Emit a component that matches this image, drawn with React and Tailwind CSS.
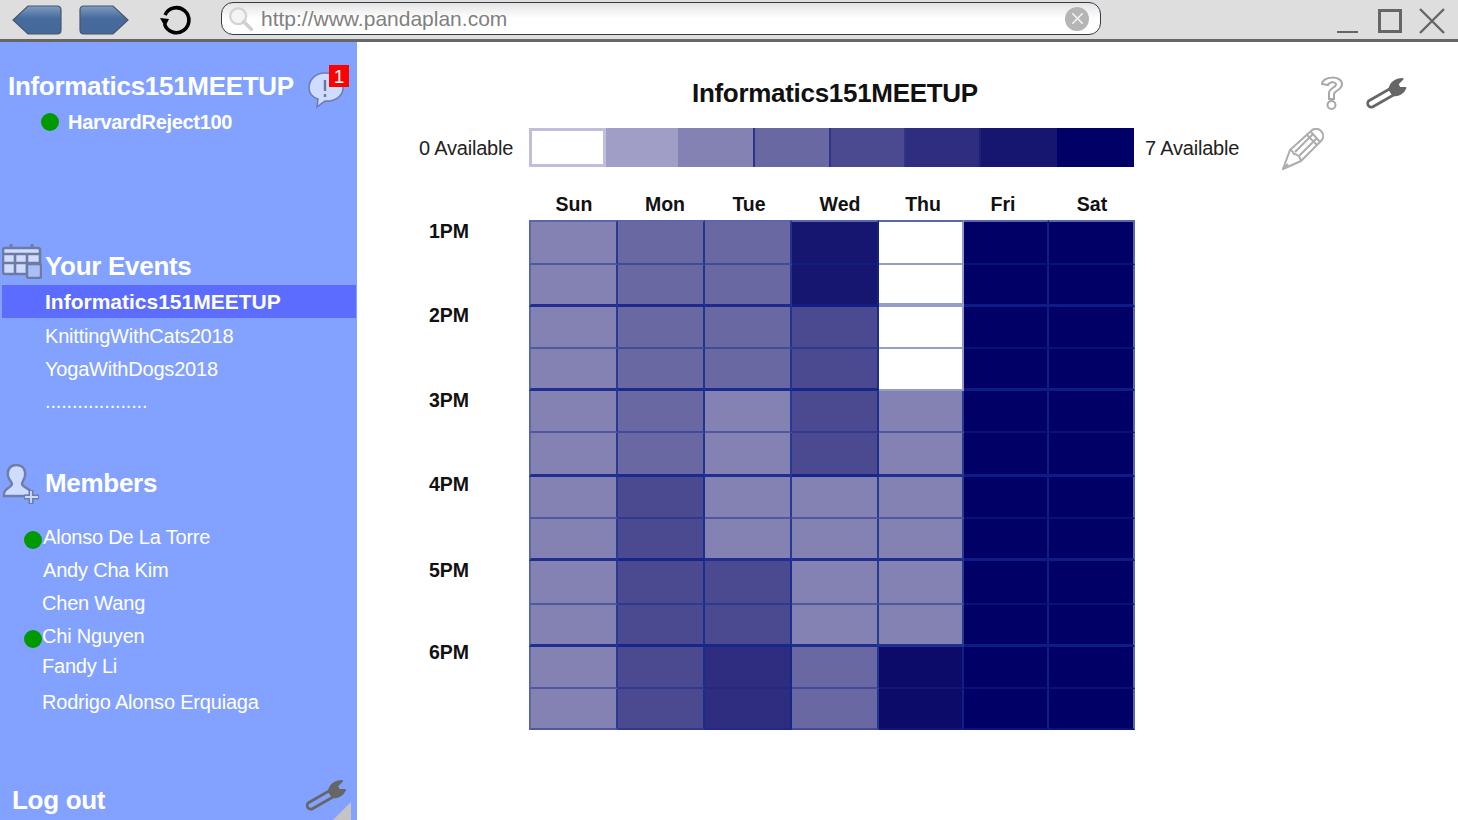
import { X } from "lucide-react";

const levels = [
  "bg-[#ffffff]",
  "bg-[#a09ec6]",
  "bg-[#8482b3]",
  "bg-[#6a68a3]",
  "bg-[#4b4a90]",
  "bg-[#2e2d80]",
  "bg-[#161570]",
  "bg-[#000066]",
  "bg-[#0c0b69]",
];

const dayLabels = [
  ["Sun", "w-[90px]"],
  ["Mon", "w-[92px]"],
  ["Tue", "w-[76px]"],
  ["Wed", "w-[106px]"],
  ["Thu", "w-[60px]"],
  ["Fri", "w-[100px]"],
  ["Sat", "w-[78px]"],
];

const timeLabels = [
  ["1PM", "h-[84px]"],
  ["2PM", "h-[85px]"],
  ["3PM", "h-[84px]"],
  ["4PM", "h-[86px]"],
  ["5PM", "h-[82px]"],
  ["6PM", "h-[60px]"],
];

// availability per half hour, one number per day (8 = the slightly darker Thu evening)
const slots = [
  [2, 3, 3, 6, 0, 7, 7],
  [2, 3, 3, 6, 0, 7, 7],
  [2, 3, 3, 4, 0, 7, 7],
  [2, 3, 3, 4, 0, 7, 7],
  [2, 3, 2, 4, 2, 7, 7],
  [2, 3, 2, 4, 2, 7, 7],
  [2, 4, 2, 2, 2, 7, 7],
  [2, 4, 2, 2, 2, 7, 7],
  [2, 4, 4, 2, 2, 7, 7],
  [2, 4, 4, 2, 2, 7, 7],
  [2, 4, 5, 3, 8, 7, 7],
  [2, 4, 5, 3, 8, 7, 7],
];

const members = [
  ["Alonso De La Torre", true, "pl-[43px]"],
  ["Andy Cha Kim", false, "pl-[43px]"],
  ["Chen Wang", false, "pl-[42px]"],
  ["Chi Nguyen", true, "pl-[42px]"],
  ["Fandy Li", false, "pl-[42px] -mt-[3px]"],
  ["Rodrigo Alonso Erquiaga", false, "pl-[42px] mt-[3px]"],
];

function Wrench({ className }) {
  return (
    <svg viewBox="0 0 42 32" className={className} fill="none">
      <path
        d="M3 24 L24 12 L28 18 L7 30 C3 31 1 27 3 24 Z"
        stroke="#666"
        strokeWidth="2.6"
        strokeLinejoin="round"
      />
      <path d="M24 12 C25 6 30 2 37 2 L32 7 L34 11 L40 11 C38 16 33 19 28 18 Z" fill="#666" stroke="#666" strokeWidth="2" strokeLinejoin="round" />
    </svg>
  );
}

function NavArrow({ flip, id }) {
  return (
    <svg viewBox="0 0 50 30" className={`w-[50px] h-[30px] ${flip ? "-scale-x-100" : ""}`}>
      <defs>
        <linearGradient id={id} x1="0" y1="0" x2="0" y2="1">
          <stop offset="0" stopColor="#7f9cc2" />
          <stop offset="0.45" stopColor="#456a9c" />
          <stop offset="1" stopColor="#47699a" />
        </linearGradient>
      </defs>
      <path d="M5 1 H34 L49 15 L34 29 H5 Q1 29 1 25 V5 Q1 1 5 1 Z" fill={`url(#${id})`} stroke="#47566e" strokeWidth="1.2" />
    </svg>
  );
}

function BrowserBar() {
  return (
    <div className="h-[42px] bg-[#dedede] border-b-[3px] border-[#666666] flex items-center shrink-0">
      <div className="ml-[12px] mt-[1px]"><NavArrow flip id="navBack" /></div>
      <div className="ml-[17px] mt-[1px]"><NavArrow id="navNext" /></div>
      <svg viewBox="0 0 32 32" className="ml-[31px] w-[32px] h-[32px] mt-[1px]" fill="none">
        <path d="M5 11 A12.5 12.5 0 1 1 4.5 20" stroke="#000" strokeWidth="3.6" />
        <path d="M0 14 L9 15 L5 23 Z" fill="#000" />
      </svg>
      <div className="ml-[29px] w-[880px] h-[33px] mt-[-2px] rounded-[12px] border-[1.5px] border-[#333b47] bg-gradient-to-b from-[#e4e4e4] via-white to-white flex items-center">
        <svg viewBox="0 0 30 30" className="ml-[5px] w-[28px] h-[28px]" fill="none">
          <circle cx="12" cy="12" r="8.5" stroke="#d4d4d4" strokeWidth="2.5" fill="#f4f4f4" />
          <path d="M18 18 L26 26" stroke="#cfcfcf" strokeWidth="4" strokeLinecap="round" />
        </svg>
        <span className="ml-[6px] text-[21px] text-[#808080]">http://www.pandaplan.com</span>
        <span className="ml-auto mr-[11px] w-[24px] h-[24px] rounded-full bg-[#b5b5b5] flex items-center justify-center">
          <X size={19} color="#fff" strokeWidth={1.6} />
        </span>
      </div>
      <div className="ml-auto flex items-center">
        <span className="w-[21px] h-[2.5px] bg-[#666666] mt-[25px]" />
        <span className="ml-[20px] w-[24px] h-[24px] border-[3px] border-[#666666] mt-[3px]" />
        <svg viewBox="0 0 28 28" className="ml-[16px] mr-[12px] w-[28px] h-[28px] mt-[3px]" stroke="#666" strokeWidth="2.4">
          <path d="M2 2 L26 26 M26 2 L2 26" />
        </svg>
      </div>
    </div>
  );
}

function Sidebar() {
  return (
    <aside className="relative w-[357px] h-[778px] shrink-0 bg-[#83a2ff] text-white overflow-hidden">
      <div className="flex items-center pl-[8px] pt-[28px] h-[60px]">
        <span className="text-[26px] tracking-[-0.3px] font-bold leading-none whitespace-nowrap">Informatics151MEETUP</span>
      </div>
      {/* chat bubble with badge */}
      <svg viewBox="0 0 38 38" className="absolute left-[307px] top-[29px] w-[38px] h-[38px]">
        <path d="M18 2 C28 2 36 8 36 17 C36 25 28 31 18 30 L10 36 L11 28 C5 26 2 22 2 17 C2 8 9 2 18 2 Z" fill="#cfdcff" stroke="#6d7fb3" strokeWidth="1.6" />
        <path d="M18 9 V20 M18 23 V26" stroke="#6b7894" strokeWidth="2.4" />
      </svg>
      <span className="absolute left-[329px] top-[23px] w-[20px] h-[22px] bg-[#ff0000] flex items-center justify-center text-[19px] leading-none">1</span>

      <div className="flex items-center h-[24px] mt-[8px] pl-[41px]">
        <span className="w-[18px] h-[18px] rounded-full bg-[#009900]" />
        <span className="ml-[9px] text-[20px] tracking-[-0.3px] font-bold leading-none">HarvardReject100</span>
      </div>

      <div className="relative h-[40px] mt-[112px] pl-[45px] flex items-center">
        <svg viewBox="0 0 40 36" className="absolute left-[2px] -top-[3px] w-[40px] h-[36px]">
          <path d="M9 1 V7 M30 1 V7" stroke="#6d7ba3" strokeWidth="3" />
          <rect x="1" y="5" width="37" height="26" rx="2" fill="#cfdcff" stroke="#6d7ba3" strokeWidth="2.6" />
          <path d="M1 11 H38 M1 20 H38 M13 11 V31 M25 11 V31" stroke="#6d7ba3" strokeWidth="2.6" />
          <rect x="25" y="21" width="14" height="14" rx="2" fill="#a9bff5" stroke="#6d7ba3" strokeWidth="2.4" />
        </svg>
        <span className="text-[26px] tracking-[-0.3px] font-bold leading-none">Your Events</span>
      </div>

      <div className="-mt-[1px] ml-[2px] mr-[1px] h-[33px] bg-[#5b6cff] pl-[43px] flex items-center">
        <span className="text-[21px] font-bold leading-none">Informatics151MEETUP</span>
      </div>
      <div className="h-[35px] pl-[45px] flex items-center text-[20px] tracking-[-0.2px]">KnittingWithCats2018</div>
      <div className="h-[32px] pl-[45px] flex items-center text-[20px] tracking-[-0.2px]">YogaWithDogs2018</div>
      <div className="h-[32px] pl-[45px] flex items-center text-[20px] tracking-[-0.17px] leading-none">...................</div>

      <div className="relative h-[44px] mt-[45px] pl-[45px] flex items-center">
        <svg viewBox="0 0 40 44" className="absolute left-[2px] top-[1px] w-[40px] h-[44px]">
          <path d="M14 2 C21 2 24 7 23 13 C22 17 20 19 20 21 C20 24 27 25 29 29 L29 33 H2 L2 30 C3 25 10 24 10 21 C10 19 7 17 6 13 C5 7 8 2 14 2 Z" fill="#cfdcff" stroke="#6d7fa8" strokeWidth="2.4" />
          <path d="M29 27 V41 M22 34 H37" stroke="#6d7fa8" strokeWidth="5" />
          <path d="M29 28 V40 M23 34 H36" stroke="#cfdcff" strokeWidth="1.8" />
        </svg>
        <span className="text-[26px] tracking-[-0.3px] font-bold leading-none -mt-[2px]">Members</span>
      </div>

      <div className="mt-[14px]">
        {members.map(([name, online, rowClass]) => (
          <div key={name} className={`relative h-[33px] flex items-center text-[20px] tracking-[-0.2px] leading-none ${rowClass}`}>
            {online && <span className="absolute left-[24px] top-[11px] w-[18px] h-[18px] rounded-full bg-[#009900]" />}
            <span>{name}</span>
          </div>
        ))}
      </div>

      <div className="absolute left-[12px] top-[745px] text-[26px] tracking-[-0.3px] font-bold leading-none">Log out</div>
      <Wrench className="absolute left-[305px] top-[737px] w-[42px] h-[32px]" />
      <div className="absolute left-[333px] bottom-0 w-[18px] h-[18px] bg-[#c4c4c4] [clip-path:polygon(100%_0,100%_100%,0_100%)]" />
    </aside>
  );
}

function Legend() {
  return (
    <div className="flex items-center h-[39px] mt-[16px] pl-[62px]">
      <span className="w-[110px] text-[20px] tracking-[-0.2px] text-[#222222] whitespace-nowrap">0 Available</span>
      <div className="flex h-[39px] w-[605px]">
        <div className="w-[77px] bg-white border-[3px] border-[#c0bfdb]" />
        <div className="w-[72px] bg-[#a09ec6]" />
        <div className="w-[77px] bg-[#8482b3] border-r-2 border-[#2e3488]" />
        <div className="w-[76px] bg-[#6a68a3] border-r-2 border-[#2e3488]" />
        <div className="w-[75px] bg-[#4b4a90] border-r-2 border-[#2e3488]" />
        <div className="w-[75px] bg-[#2e2d80] border-r-2 border-[#1a2277]" />
        <div className="w-[76px] bg-[#161570]" />
        <div className="w-[77px] bg-[#000066]" />
      </div>
      <span className="ml-[11px] text-[20px] tracking-[-0.2px] text-[#222222] whitespace-nowrap">7 Available</span>
      <svg viewBox="0 0 42 42" className="ml-[43px] mt-[2px] w-[42px] h-[42px]" fill="none" stroke="#adadad" strokeWidth="2" strokeLinejoin="round">
        <path d="M1 41 L8 22 L29 3 C32 0 36 0 39 3 C42 6 42 10 39 13 L19 33 Z" fill="#fff" />
        <path d="M8 22 C10 22 11 24 12 26 C15 26 18 29 19 33 M1 41 L6 36 M25 7 L35 17 M29 4 L38 14 M13 24 L31 6 M17 28 L35 10" />
      </svg>
    </div>
  );
}

function cellBorder(level, r, c) {
  const parts = ["border-r-2"];
  if (c === 6) parts.push("border-r-[#5a66ad]");
  else if (level === 0) parts.push("border-r-[#8f9bc9]");
  else parts.push("border-r-[#10288a]/80");
  if (c === 0) parts.push("border-l-2 border-l-[#5a66ad]");
  if (r === 0) parts.push("border-t-2 border-t-[#5a66ad]");
  if (level === 0 && r === 1) parts.push("border-b-[4px] border-b-[#10288a]/45");
  else if (r % 2 === 1 && r < 11 && level !== 0) parts.push("border-b-[3px] border-b-[#10208a]/85");
  else parts.push("border-b-2 border-b-[#10288a]/45");
  return parts.join(" ");
}

function Schedule() {
  return (
    <div className="flex mt-[23px] pl-[62px]">
      <div className="w-[110px] pt-[30px] pl-[10px] text-[19.5px] font-bold text-[#111111]">
        {timeLabels.map(([label, h]) => (
          <div key={label} className={`${h} leading-[22px]`}>{label}</div>
        ))}
      </div>
      <div>
        <div className="flex h-[30px] text-[19.5px] font-bold text-[#111111]">
          {dayLabels.map(([day, w]) => (
            <div key={day} className={`${w} text-center leading-[28px]`}>{day}</div>
          ))}
        </div>
        <div className="grid w-[606px] grid-cols-[89px_87px_87px_87px_85px_85px_86px] grid-rows-[45px_42px_42px_42px_42px_44px_42px_42px_44px_42px_42px_41px]">
          {slots.flatMap((row, r) =>
            row.map((level, c) => (
              <div key={`${r}-${c}`} className={`${levels[level]} ${cellBorder(level, r, c)}`} />
            ))
          )}
        </div>
      </div>
    </div>
  );
}

export default function App() {
  return (
    <div className="w-[1458px] h-[820px] overflow-hidden bg-white font-['Liberation_Sans',Arial,sans-serif] flex flex-col">
      <BrowserBar />
      <div className="flex flex-1 min-h-0">
        <Sidebar />
        <main className="flex-1 min-w-0">
          <div className="flex items-start h-[70px]">
            <h1 className="ml-[335px] mt-[38px] text-[26px] tracking-[-0.3px] font-bold leading-none text-[#111111] whitespace-nowrap">Informatics151MEETUP</h1>
            <svg viewBox="0 0 24 36" className="ml-[342px] mt-[33px] w-[24px] h-[36px]" fill="none" stroke="#a8a8a8" strokeWidth="2">
              <path d="M2 9 C2 1 22 0 22 9 C22 15 15 15 14 19 L14 24 L9 24 L9 18 C9 13 17 12 16 9 C15 6 9 7 8 10 Z" fill="#fff" />
              <circle cx="11.5" cy="30" r="4" />
            </svg>
            <Wrench className="ml-[21px] mt-[35px] w-[43px] h-[32px]" />
          </div>
          <Legend />
          <Schedule />
        </main>
      </div>
    </div>
  );
}
